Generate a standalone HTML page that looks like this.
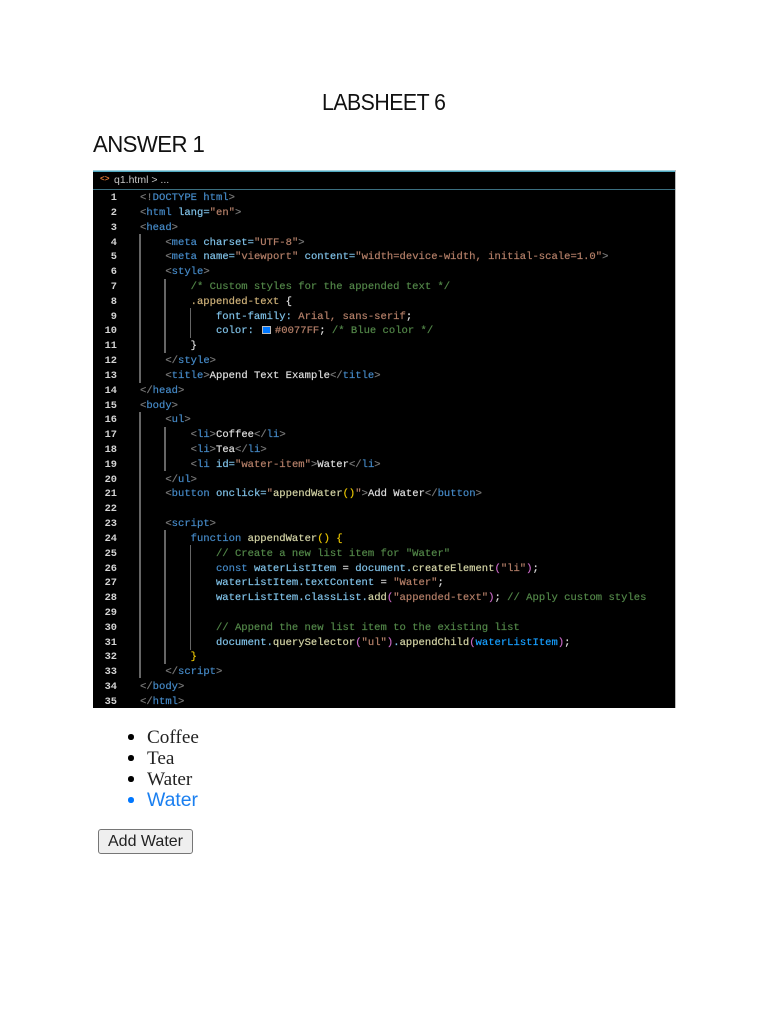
<!DOCTYPE html>
<html lang="en">
<head>
<meta charset="UTF-8">
<title>LABSHEET 6</title>
<style>
html,body{margin:0;padding:0;background:#fff;}
body{width:768px;height:1024px;position:relative;overflow:hidden;font-family:"Liberation Sans",sans-serif;}
.abs{position:absolute;white-space:nowrap;}
#shot{left:93px;top:170px;width:582px;height:538px;background:#000;overflow:hidden;}
.ln{position:absolute;left:0;width:24px;margin-top:1px;text-align:right;color:#d4d4d4;font:bold 10.35px/14.82px "Liberation Mono",monospace;filter:blur(.25px);}
.c{position:absolute;left:47px;margin-top:1px;white-space:pre;color:#7fc0e6;font:10.55px/14.82px "Liberation Mono",monospace;-webkit-text-stroke:.2px;filter:blur(.3px);}
.g{color:#787878}.t{color:#4589c6}.a{color:#9cdcfe}.s{color:#b47f68}.w{color:#dedede}.m{color:#528648}.y{color:#e8c400}.f{color:#d2d2a4}.p{color:#c868c4}.l{color:#179fff}.cl{color:#cdb078}
.g1{position:absolute;width:2px;background:#666;}
</style>
</head>
<body>
<div class="abs" style="left:322px;top:88px;font-size:23px;line-height:28px;color:#111;letter-spacing:-.55px;transform:scaleX(.925);transform-origin:left center;">LABSHEET 6</div>
<div class="abs" style="left:93px;top:130px;font-size:23px;line-height:28px;color:#111;letter-spacing:-.6px;transform:scaleX(.965);transform-origin:left center;">ANSWER 1</div>

<div id="shot" class="abs">
  <div style="position:absolute;left:0;top:0;width:582px;height:1px;background:#9fd0dc;"></div>
  <div style="position:absolute;left:0;top:1px;width:582px;height:1px;background:#4fa8c0;"></div>
  <div style="position:absolute;left:0;top:19px;width:582px;height:1px;background:#3b6f80;"></div>
  <div style="position:absolute;left:7px;top:3px;font:bold 8px/14px 'Liberation Mono',monospace;color:#e37933;">&lt;&gt;</div>
  <div style="position:absolute;left:21px;top:4px;font:10.5px/13px 'Liberation Sans',sans-serif;color:#c8c8c8;">q1.html &gt; ...</div>

  <div class="g1" style="left:46px;top:64px;height:149px;"></div>
  <div class="g1" style="left:71px;top:109px;height:74px;"></div>
  <div class="g1" style="left:97px;top:138px;height:30px;width:1px;"></div>
  <div class="g1" style="left:46px;top:242px;height:266px;"></div>
  <div class="g1" style="left:71px;top:257px;height:44px;"></div>
  <div class="g1" style="left:71px;top:360px;height:134px;"></div>
  <div class="g1" style="left:97px;top:375px;height:105px;width:1px;"></div>

  <div style="position:absolute;left:169px;top:156px;width:9px;height:8px;background:#0077ff;border:1px solid #bbb;box-sizing:border-box;"></div>

  <div class="ln" style="top:20px">1</div><div class="c" style="top:20px"><span class="g">&lt;!</span><span class="t">DOCTYPE html</span><span class="g">&gt;</span></div>
  <div class="ln" style="top:34.8px">2</div><div class="c" style="top:34.8px"><span class="g">&lt;</span><span class="t">html</span> lang=<span class="s">"en"</span><span class="g">&gt;</span></div>
  <div class="ln" style="top:49.6px">3</div><div class="c" style="top:49.6px"><span class="g">&lt;</span><span class="t">head</span><span class="g">&gt;</span></div>
  <div class="ln" style="top:64.5px">4</div><div class="c" style="top:64.5px">    <span class="g">&lt;</span><span class="t">meta</span> charset=<span class="s">"UTF-8"</span><span class="g">&gt;</span></div>
  <div class="ln" style="top:79.3px">5</div><div class="c" style="top:79.3px">    <span class="g">&lt;</span><span class="t">meta</span> name=<span class="s">"viewport"</span> content=<span class="s">"width=device-width, initial-scale=1.0"</span><span class="g">&gt;</span></div>
  <div class="ln" style="top:94.1px">6</div><div class="c" style="top:94.1px">    <span class="g">&lt;</span><span class="t">style</span><span class="g">&gt;</span></div>
  <div class="ln" style="top:108.9px">7</div><div class="c" style="top:108.9px">        <span class="m">/* Custom styles for the appended text */</span></div>
  <div class="ln" style="top:123.7px">8</div><div class="c" style="top:123.7px">        <span class="cl">.appended-text</span> <span class="w">{</span></div>
  <div class="ln" style="top:138.6px">9</div><div class="c" style="top:138.6px">            font-family: <span class="s">Arial, sans-serif</span><span class="w">;</span></div>
  <div class="ln" style="top:153.4px">10</div><div class="c" style="top:153.4px">            color:   <span class="s" style="margin-left:2px">#0077FF</span><span class="w">;</span> <span class="m">/* Blue color */</span></div>
  <div class="ln" style="top:168.2px">11</div><div class="c" style="top:168.2px">        <span class="w">}</span></div>
  <div class="ln" style="top:183px">12</div><div class="c" style="top:183px">    <span class="g">&lt;/</span><span class="t">style</span><span class="g">&gt;</span></div>
  <div class="ln" style="top:197.8px">13</div><div class="c" style="top:197.8px">    <span class="g">&lt;</span><span class="t">title</span><span class="g">&gt;</span><span class="w">Append Text Example</span><span class="g">&lt;/</span><span class="t">title</span><span class="g">&gt;</span></div>
  <div class="ln" style="top:212.7px">14</div><div class="c" style="top:212.7px"><span class="g">&lt;/</span><span class="t">head</span><span class="g">&gt;</span></div>
  <div class="ln" style="top:227.5px">15</div><div class="c" style="top:227.5px"><span class="g">&lt;</span><span class="t">body</span><span class="g">&gt;</span></div>
  <div class="ln" style="top:242.3px">16</div><div class="c" style="top:242.3px">    <span class="g">&lt;</span><span class="t">ul</span><span class="g">&gt;</span></div>
  <div class="ln" style="top:257.1px">17</div><div class="c" style="top:257.1px">        <span class="g">&lt;</span><span class="t">li</span><span class="g">&gt;</span><span class="w">Coffee</span><span class="g">&lt;/</span><span class="t">li</span><span class="g">&gt;</span></div>
  <div class="ln" style="top:271.9px">18</div><div class="c" style="top:271.9px">        <span class="g">&lt;</span><span class="t">li</span><span class="g">&gt;</span><span class="w">Tea</span><span class="g">&lt;/</span><span class="t">li</span><span class="g">&gt;</span></div>
  <div class="ln" style="top:286.8px">19</div><div class="c" style="top:286.8px">        <span class="g">&lt;</span><span class="t">li</span> id=<span class="s">"water-item"</span><span class="g">&gt;</span><span class="w">Water</span><span class="g">&lt;/</span><span class="t">li</span><span class="g">&gt;</span></div>
  <div class="ln" style="top:301.6px">20</div><div class="c" style="top:301.6px">    <span class="g">&lt;/</span><span class="t">ul</span><span class="g">&gt;</span></div>
  <div class="ln" style="top:316.4px">21</div><div class="c" style="top:316.4px">    <span class="g">&lt;</span><span class="t">button</span> onclick=<span class="s">"</span><span class="f">appendWater</span><span class="y">()</span><span class="s">"</span><span class="g">&gt;</span><span class="w">Add Water</span><span class="g">&lt;/</span><span class="t">button</span><span class="g">&gt;</span></div>
  <div class="ln" style="top:331.2px">22</div>
  <div class="ln" style="top:346px">23</div><div class="c" style="top:346px">    <span class="g">&lt;</span><span class="t">script</span><span class="g">&gt;</span></div>
  <div class="ln" style="top:360.9px">24</div><div class="c" style="top:360.9px">        <span class="t">function</span> <span class="f">appendWater</span><span class="y">() {</span></div>
  <div class="ln" style="top:375.7px">25</div><div class="c" style="top:375.7px">            <span class="m">// Create a new list item for "Water"</span></div>
  <div class="ln" style="top:390.5px">26</div><div class="c" style="top:390.5px">            <span class="t">const</span> waterListItem <span class="w">=</span> document.<span class="f">createElement</span><span class="p">(</span><span class="s">"li"</span><span class="p">)</span><span class="w">;</span></div>
  <div class="ln" style="top:405.3px">27</div><div class="c" style="top:405.3px">            waterListItem.textContent <span class="w">=</span> <span class="s">"Water"</span><span class="w">;</span></div>
  <div class="ln" style="top:420.1px">28</div><div class="c" style="top:420.1px">            waterListItem.classList.<span class="f">add</span><span class="p">(</span><span class="s">"appended-text"</span><span class="p">)</span><span class="w">;</span> <span class="m">// Apply custom styles</span></div>
  <div class="ln" style="top:435px">29</div>
  <div class="ln" style="top:449.8px">30</div><div class="c" style="top:449.8px">            <span class="m">// Append the new list item to the existing list</span></div>
  <div class="ln" style="top:464.6px">31</div><div class="c" style="top:464.6px">            document.<span class="f">querySelector</span><span class="p">(</span><span class="s">"ul"</span><span class="p">)</span>.<span class="f">appendChild</span><span class="p">(</span><span class="l">waterListItem</span><span class="p">)</span><span class="w">;</span></div>
  <div class="ln" style="top:479.4px">32</div><div class="c" style="top:479.4px">        <span class="y">}</span></div>
  <div class="ln" style="top:494.2px">33</div><div class="c" style="top:494.2px">    <span class="g">&lt;/</span><span class="t">script</span><span class="g">&gt;</span></div>
  <div class="ln" style="top:509.1px">34</div><div class="c" style="top:509.1px"><span class="g">&lt;/</span><span class="t">body</span><span class="g">&gt;</span></div>
  <div class="ln" style="top:523.9px">35</div><div class="c" style="top:523.9px"><span class="g">&lt;/</span><span class="t">html</span><span class="g">&gt;</span></div>
</div>
<div class="abs" style="left:675px;top:170px;width:1px;height:538px;background:#bbb;"></div>

<div class="abs" style="left:128px;top:734px;width:5.5px;height:5.5px;border-radius:50%;background:#000;"></div>
<div class="abs" style="left:128px;top:755px;width:5.5px;height:5.5px;border-radius:50%;background:#000;"></div>
<div class="abs" style="left:128px;top:776px;width:5.5px;height:5.5px;border-radius:50%;background:#000;"></div>
<div class="abs" style="left:128px;top:797px;width:5.5px;height:5.5px;border-radius:50%;background:#0077ff;"></div>
<div class="abs" style="left:147px;top:727px;font:19.2px/21px 'Liberation Serif',serif;color:#222;">Coffee</div>
<div class="abs" style="left:147px;top:748px;font:19.2px/21px 'Liberation Serif',serif;color:#222;">Tea</div>
<div class="abs" style="left:147px;top:769px;font:19.2px/21px 'Liberation Serif',serif;color:#222;">Water</div>
<div class="abs" style="left:147px;top:789px;font:19.4px/22px 'Liberation Sans',sans-serif;color:#1a7ff0;">Water</div>
<div class="abs" style="left:98px;top:829px;width:95px;height:25px;box-sizing:border-box;background:#efefef;border:1px solid #767676;border-radius:3px;font:16px/23px 'Liberation Sans',sans-serif;color:#222;text-align:center;">Add Water</div>
</body>
</html>
